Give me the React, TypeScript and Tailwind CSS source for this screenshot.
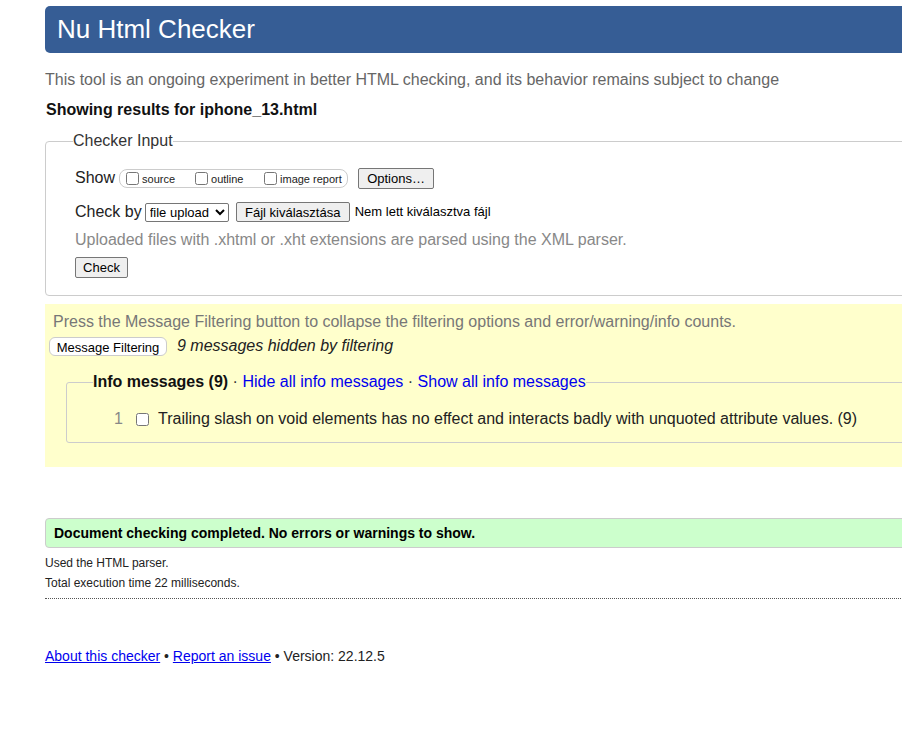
import React from "react";

const App: React.FC = () => {
  return (
    <div className="w-[902px] min-h-[747px] overflow-hidden bg-white font-['Liberation_Sans',Arial,sans-serif] text-[#222]">
      <div className="ml-[45px] w-[900px] pt-[6px]">
        {/* header */}
        <h1 className="h-[47px] rounded-l-[5px] bg-[#365d95] pl-[12px] text-[26px] leading-[47px] text-white">
          Nu Html Checker
        </h1>

        <p className="mt-[17px] text-[16px] leading-[20px] text-[#666]">
          This tool is an ongoing experiment in better HTML checking, and its behavior remains subject to change
        </p>
        <p className="mt-[10px] ml-[1px] text-[16px] font-bold leading-[20px] text-[#111]">
          Showing results for iphone_13.html
        </p>

        {/* checker input */}
        <fieldset className="mt-[12px] h-[164px] rounded-[4px] border border-[#ccc] pl-[29px]">
          <legend className="ml-[-2px] px-[0px] text-[16px] leading-[18px] text-[#333]">Checker Input</legend>

          <div className="mt-[17px] flex items-center h-[22px]">
            <span className="text-[16px] text-[#222] mr-[4px]">Show</span>
            <div className="flex h-[19px] w-[229px] items-center rounded-[8px] border border-[#ccc] pl-[2px] text-[11px] text-[#222]">
              <label className="flex items-center w-[69px]">
                <input type="checkbox" className="m-[0_3px_0_4px] h-[13px] w-[13px]" />
                <span className="mt-[2px]">source</span>
              </label>
              <label className="flex items-center w-[69px]">
                <input type="checkbox" className="m-[0_3px_0_4px] h-[13px] w-[13px]" />
                <span className="mt-[2px]">outline</span>
              </label>
              <label className="flex items-center">
                <input type="checkbox" className="m-[0_3px_0_4px] h-[13px] w-[13px]" />
                <span className="mt-[2px]">image report</span>
              </label>
            </div>
            <button className="ml-[10px] h-[21px] w-[76px] rounded-[2px] border border-[#767676] bg-[#efefef] text-[13px] text-black">
              Options…
            </button>
          </div>

          <div className="mt-[13px] flex items-center h-[20px]">
            <span className="text-[16px] text-[#222] mr-[3px]">Check by</span>
            <select className="h-[19px] w-[84px] rounded-[2px] border border-[#767676] bg-white text-[13px] text-black">
              <option>file upload</option>
            </select>
            <button className="ml-[7px] h-[20px] w-[114px] rounded-[2px] border border-[#767676] bg-[#efefef] text-[13px] text-black">
              Fájl kiválasztása
            </button>
            <span className="ml-[5px] text-[13px] text-black">Nem lett kiválasztva fájl</span>
          </div>

          <p className="mt-[8px] text-[16px] leading-[20px] text-[#888]">
            Uploaded files with .xhtml or .xht extensions are parsed using the XML parser.
          </p>

          <button className="mt-[7px] h-[21px] w-[53px] rounded-[2px] border border-[#767676] bg-[#efefef] text-[13px] text-black">
            Check
          </button>
        </fieldset>

        {/* filtering */}
        <div className="mt-[8px] h-[163px] bg-[#ffffcc] pt-[8px]">
          <p className="ml-[8px] text-[16px] leading-[20px] text-[#777]">
            Press the Message Filtering button to collapse the filtering options and error/warning/info counts.
          </p>
          <div className="mt-[2px] flex items-center">
            <button className="ml-[4px] h-[19px] w-[118px] rounded-[6px] border border-[#ccc] bg-white text-[13px] text-black">
              Message Filtering
            </button>
            <span className="ml-[10px] text-[16px] italic text-[#222]">9 messages hidden by filtering</span>
          </div>

          <fieldset className="mt-[14px] ml-[21px] h-[71px] rounded-[3px] border border-[#ccc] pl-[26px]">
            <legend className="text-[16px] leading-[20px]">
              <span className="font-bold text-[#111]">Info messages (9)</span>
              <span className="text-[#333]"> · </span>
              <a href="#" className="text-[#0000ee]">Hide all info messages</a>
              <span className="text-[#333]"> · </span>
              <a href="#" className="text-[#0000ee]">Show all info messages</a>
            </legend>
            <div className="mt-[15px] flex items-center text-[16px]">
              <span className="w-[22px] pl-[21px] text-[#888]">1</span>
              <input type="checkbox" className="ml-[21px] h-[13px] w-[13px]" />
              <span className="ml-[9px] text-[#222]">
                Trailing slash on void elements has no effect and interacts badly with unquoted attribute values. (9)
              </span>
            </div>
          </fieldset>
        </div>

        {/* result */}
        <div className="mt-[51px] h-[30px] rounded-l-[4px] border border-[#ccc] bg-[#ccffcc] pl-[8px] text-[14px] font-bold leading-[28px] text-black">
          Document checking completed. No errors or warnings to show.
        </div>
        <p className="mt-[7px] text-[12px] leading-[16px] text-[#222]">Used the HTML parser.</p>
        <p className="mt-[4px] text-[12px] leading-[16px] text-[#222]">Total execution time 22 milliseconds.</p>
        <div className="mt-[7px] border-t border-dotted border-[#555]" />

        {/* footer */}
        <p className="mt-[48px] text-[14px] leading-[18px] text-[#222]">
          <a href="#" className="text-[#0000ee] underline">About this checker</a>
          {" • "}
          <a href="#" className="text-[#0000ee] underline">Report an issue</a>
          {" • Version: 22.12.5"}
        </p>
      </div>
    </div>
  );
};

export default App;
